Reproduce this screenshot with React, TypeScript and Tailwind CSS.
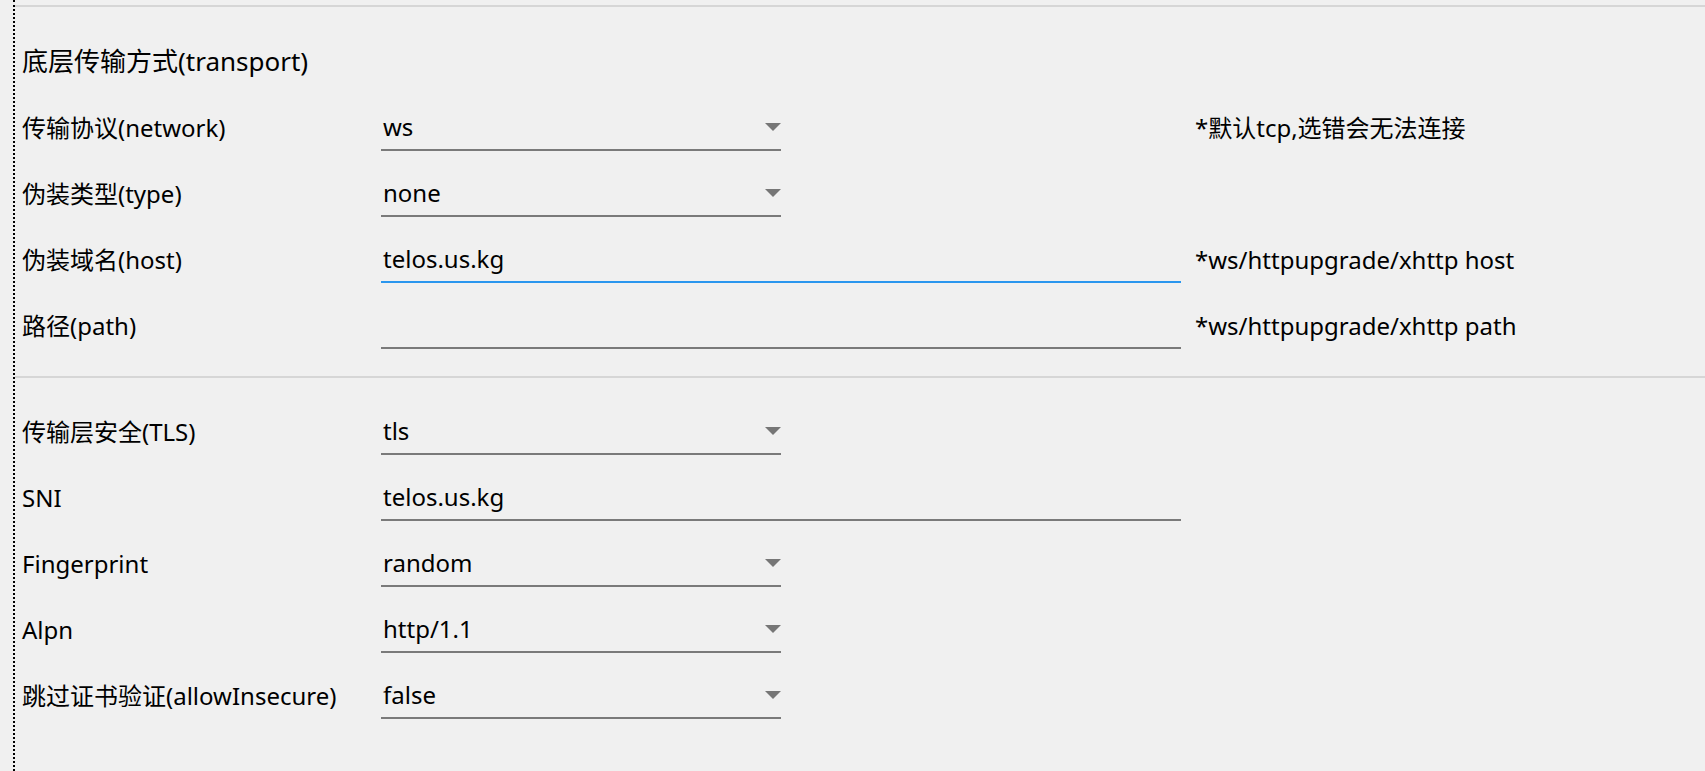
import React from "react";

const font = {
  fontFamily: '"Segoe UI", "Noto Sans", "Noto Sans CJK SC", sans-serif',
};

function Arrow() {
  return (
    <svg width="16" height="8" viewBox="0 0 16 8" className="shrink-0">
      <polygon points="0,0 16,0 8,8" fill="#767676" />
    </svg>
  );
}

function SelectBox({ value }: { value: string }) {
  return (
    <div className="w-[400px] h-[46px] border-b-2 border-[#7a7a7a] flex items-center justify-between pl-[2px]">
      <span>{value}</span>
      <Arrow />
    </div>
  );
}

function TextBox({ value, focused }: { value: string; focused?: boolean }) {
  return (
    <div
      className={
        "w-[800px] h-[46px] border-b-2 flex items-center pl-[2px] " +
        (focused ? "border-[#2a96ee]" : "border-[#7a7a7a]")
      }
    >
      <span>{value}</span>
    </div>
  );
}

function Row({
  label,
  children,
  note,
}: {
  label: string;
  children: React.ReactNode;
  note?: string;
}) {
  return (
    <div className="flex items-center h-[66px]">
      <div className="w-[366px] pl-[7px] shrink-0 whitespace-nowrap">{label}</div>
      <div className="w-[800px] shrink-0">{children}</div>
      {note && <div className="ml-[14px] whitespace-nowrap">{note}</div>}
    </div>
  );
}

export default function App() {
  return (
    <div
      className="w-full h-screen bg-[#f0f0f0] text-black text-[24px] leading-[32px] flex overflow-hidden"
      style={font}
    >
      <div className="w-[13px] shrink-0" />
      <div className="w-0 h-full border-l-2 border-dotted border-black shrink-0" />
      <div className="flex-1 flex flex-col pt-[5px]">
        <div className="h-[2px] bg-[#d6d6d6]" />
        <div className="pl-[7px] pt-[38px] pb-[18px] whitespace-nowrap text-[26px]">
          底层传输方式(transport)
        </div>
        <Row label="传输协议(network)" note="*默认tcp,选错会无法连接">
          <SelectBox value="ws" />
        </Row>
        <Row label="伪装类型(type)">
          <SelectBox value="none" />
        </Row>
        <Row label="伪装域名(host)" note="*ws/httpupgrade/xhttp host">
          <TextBox value="telos.us.kg" focused />
        </Row>
        <Row label="路径(path)" note="*ws/httpupgrade/xhttp path">
          <TextBox value="" />
        </Row>
        <div className="h-[2px] bg-[#d6d6d6] mt-[17px] mb-[21px]" />
        <Row label="传输层安全(TLS)">
          <SelectBox value="tls" />
        </Row>
        <Row label="SNI">
          <TextBox value="telos.us.kg" />
        </Row>
        <Row label="Fingerprint">
          <SelectBox value="random" />
        </Row>
        <Row label="Alpn">
          <SelectBox value="http/1.1" />
        </Row>
        <Row label="跳过证书验证(allowInsecure)">
          <SelectBox value="false" />
        </Row>
      </div>
    </div>
  );
}
